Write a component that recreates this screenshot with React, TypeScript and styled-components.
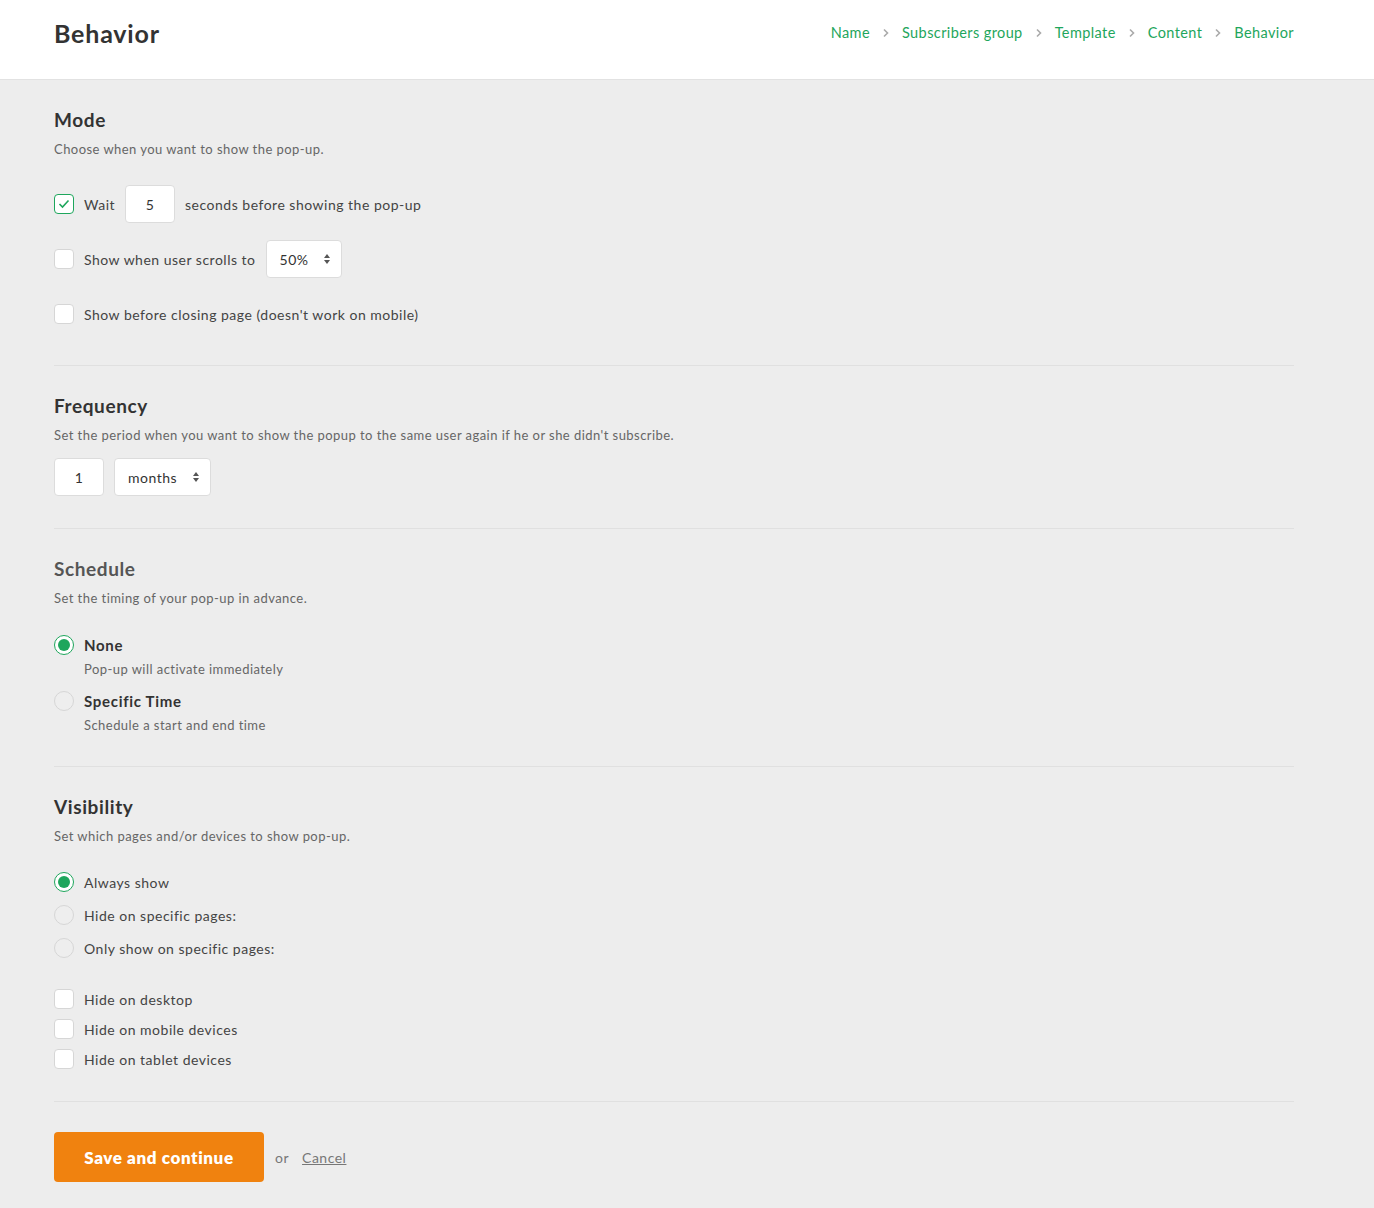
import React from 'react';
import styled, { createGlobalStyle } from 'styled-components';

const GlobalStyle = createGlobalStyle`
  html, body {
    margin: 0;
    padding: 0;
    background: #ededed;
    font-family: Lato, 'Open Sans', Arial, sans-serif;
    color: #333;
  }
`;

const green = '#1ea65c';

const Page = styled.div`
  min-height: 1208px;
  background: #ededed;
`;

const Header = styled.header`
  height: 79px;
  background: #fff;
  border-bottom: 1px solid #e2e2e2;
  display: flex;
  align-items: center;
  justify-content: space-between;
  padding: 0 80px 0 54px;
`;

const PageTitle = styled.h1`
  margin: 0;
  font-size: 25px;
  letter-spacing: 0.8px;
  font-weight: 700;
  color: #333;
  padding-bottom: 14px;
`;

const Crumbs = styled.nav`
  display: flex;
  align-items: center;
  gap: 12px;
  padding-bottom: 14px;
`;

const Crumb = styled.a`
  color: ${green};
  font-size: 14.5px;
  letter-spacing: 0.4px;
  text-decoration: none;
`;

const Content = styled.main`
  padding: 0 80px 0 54px;
`;

const Section = styled.section`
  padding: 28px 0 32px;
  border-bottom: 1px solid #e0e0e0;
`;

const Title = styled.h2<{ $muted?: boolean }>`
  margin: 0;
  font-size: 19px;
  line-height: 24px;
  letter-spacing: 0.6px;
  font-weight: 700;
  color: ${p => (p.$muted ? '#555' : '#333')};
`;

const Desc = styled.p`
  margin: 8px 0 0;
  font-size: 13px;
  line-height: 18px;
  letter-spacing: 0.45px;
  color: #666;
`;

const Rows = styled.div<{ $gap: number; $top: number }>`
  display: flex;
  flex-direction: column;
  gap: ${p => p.$gap}px;
  margin-top: ${p => p.$top}px;
`;

const Row = styled.label<{ $tall?: boolean }>`
  display: flex;
  align-items: center;
  gap: 10px;
  min-height: ${p => (p.$tall ? 38 : 20)}px;
  font-size: 14px;
  letter-spacing: 0.5px;
  color: #444;
`;

const Box = styled.span<{ $checked?: boolean }>`
  width: 20px;
  height: 20px;
  box-sizing: border-box;
  border-radius: 4px;
  background: #fff;
  border: 1px solid ${p => (p.$checked ? green : '#d6d6d6')};
  display: flex;
  align-items: center;
  justify-content: center;
  flex-shrink: 0;
`;

const Radio = styled.span<{ $checked?: boolean }>`
  width: 20px;
  height: 20px;
  box-sizing: border-box;
  border-radius: 50%;
  background: ${p => (p.$checked ? '#fff' : '#eee')};
  border: 1px solid ${p => (p.$checked ? green : '#d6d6d6')};
  display: flex;
  align-items: center;
  justify-content: center;
  flex-shrink: 0;
  &::after {
    content: '';
    display: ${p => (p.$checked ? 'block' : 'none')};
    width: 12px;
    height: 12px;
    border-radius: 50%;
    background: ${green};
  }
`;

const Field = styled.span<{ $w: number; $center?: boolean }>`
  box-sizing: border-box;
  width: ${p => p.$w}px;
  height: 38px;
  background: #fff;
  border: 1px solid #dcdcdc;
  border-radius: 4px;
  display: flex;
  align-items: center;
  justify-content: ${p => (p.$center ? 'center' : 'space-between')};
  padding: ${p => (p.$center ? '0' : '0 10px 0 13px')};
  font-size: 14px;
  letter-spacing: 0.5px;
  color: #333;
`;

const Inline = styled.div`
  display: flex;
  gap: 10px;
  margin-top: 14px;
`;

const RadioItem = styled.div`
  display: flex;
  flex-direction: column;
`;

const RadioLabel = styled.span<{ $bold?: boolean }>`
  font-weight: ${p => (p.$bold ? 700 : 400)};
  font-size: ${p => (p.$bold ? 15 : 14)}px;
  letter-spacing: ${p => (p.$bold ? 0.7 : 0.5)}px;
  color: ${p => (p.$bold ? '#333' : '#444')};
`;

const SubText = styled.span`
  margin: 5px 0 0 30px;
  font-size: 13px;
  line-height: 18px;
  letter-spacing: 0.45px;
  color: #666;
`;

const Footer = styled.div`
  display: flex;
  align-items: center;
  gap: 11px;
  padding-top: 30px;
  font-size: 14px;
  letter-spacing: 0.5px;
  color: #777;
`;

const SaveButton = styled.button`
  width: 210px;
  height: 50px;
  border: none;
  border-radius: 4px;
  background: #f0820f;
  color: #fff;
  font-family: inherit;
  font-size: 17px;
  font-weight: 800;
  letter-spacing: 0.6px;
  cursor: pointer;
`;

const CancelLink = styled.a`
  color: #777;
  text-decoration: underline;
  margin-left: 2px;
`;

const Chevron = () => (
  <svg width="8" height="10" viewBox="0 0 8 10">
    <path d="M2 1.5 L5.5 5 L2 8.5" fill="none" stroke="#aaa" strokeWidth="1.6" />
  </svg>
);

const Updown = () => (
  <svg width="8" height="12" viewBox="0 0 8 12">
    <path d="M4 1 L7 5 H1 Z M4 11 L1 7 H7 Z" fill="#555" />
  </svg>
);

const Check = () => (
  <svg width="12" height="10" viewBox="0 0 12 10">
    <path d="M1.5 5 L4.5 8 L10.5 1.5" fill="none" stroke={green} strokeWidth="1.6" />
  </svg>
);

const crumbs = ['Name', 'Subscribers group', 'Template', 'Content', 'Behavior'];

export default function App() {
  return (
    <Page>
      <GlobalStyle />
      <Header>
        <PageTitle>Behavior</PageTitle>
        <Crumbs>
          {crumbs.map((c, i) => (
            <React.Fragment key={c}>
              {i > 0 && <Chevron />}
              <Crumb href="#">{c}</Crumb>
            </React.Fragment>
          ))}
        </Crumbs>
      </Header>
      <Content>
        <Section>
          <Title>Mode</Title>
          <Desc>Choose when you want to show the pop-up.</Desc>
          <Rows $gap={17} $top={27}>
            <Row $tall>
              <Box $checked><Check /></Box>
              Wait
              <Field $w={50} $center>5</Field>
              seconds before showing the pop-up
            </Row>
            <Row $tall>
              <Box />
              Show when user scrolls to
              <Field $w={76}>50% <Updown /></Field>
            </Row>
            <Row $tall>
              <Box />
              Show before closing page (doesn't work on mobile)
            </Row>
          </Rows>
        </Section>

        <Section>
          <Title>Frequency</Title>
          <Desc>Set the period when you want to show the popup to the same user again if he or she didn't subscribe.</Desc>
          <Inline>
            <Field $w={50} $center>1</Field>
            <Field $w={97}>months <Updown /></Field>
          </Inline>
        </Section>

        <Section>
          <Title $muted>Schedule</Title>
          <Desc>Set the timing of your pop-up in advance.</Desc>
          <Rows $gap={13} $top={28}>
            <RadioItem>
              <Row>
                <Radio $checked />
                <RadioLabel $bold>None</RadioLabel>
              </Row>
              <SubText>Pop-up will activate immediately</SubText>
            </RadioItem>
            <RadioItem>
              <Row>
                <Radio />
                <RadioLabel $bold>Specific Time</RadioLabel>
              </Row>
              <SubText>Schedule a start and end time</SubText>
            </RadioItem>
          </Rows>
        </Section>

        <Section>
          <Title>Visibility</Title>
          <Desc>Set which pages and/or devices to show pop-up.</Desc>
          <Rows $gap={13} $top={27}>
            <Row><Radio $checked />Always show</Row>
            <Row><Radio />Hide on specific pages:</Row>
            <Row><Radio />Only show on specific pages:</Row>
          </Rows>
          <Rows $gap={10} $top={31}>
            <Row><Box />Hide on desktop</Row>
            <Row><Box />Hide on mobile devices</Row>
            <Row><Box />Hide on tablet devices</Row>
          </Rows>
        </Section>

        <Footer>
          <SaveButton>Save and continue</SaveButton>
          or
          <CancelLink href="#">Cancel</CancelLink>
        </Footer>
      </Content>
    </Page>
  );
}
